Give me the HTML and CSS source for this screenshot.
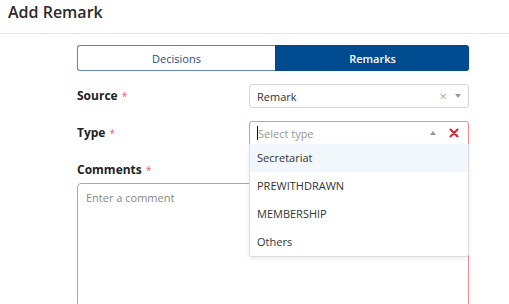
FILE: index.html
```html
<!DOCTYPE html>
<html lang="en">
<head>
  <meta charset="UTF-8">
  <title>Add Remark</title>
  <link rel="stylesheet" href="styles.css">
</head>
<body>
  <div class="modal">
    <div class="modal-header">
      <h1>Add Remark</h1>
    </div>
    <div class="modal-body">
      <div class="tabs">
        <button class="tab">Decisions</button>
        <button class="tab active">Remarks</button>
      </div>

      <div class="row">
        <label class="label">Source <span class="req">*</span></label>
        <div class="select">
          <span class="value">Remark</span>
          <span class="clear">&times;</span>
          <span class="caret down"></span>
        </div>
      </div>

      <div class="row">
        <label class="label">Type <span class="req">*</span></label>
        <div class="select-wrap">
          <div class="select open invalid">
            <span class="cursor"></span>
            <span class="placeholder">Select type</span>
            <span class="caret up"></span>
            <svg class="x-red" width="10" height="10" viewBox="0 0 10 10">
              <path d="M1.5 1.5 L8.5 8.5 M8.5 1.5 L1.5 8.5" stroke="#e0202f" stroke-width="2" stroke-linecap="round"/>
            </svg>
          </div>
          <ul class="menu">
            <li class="hover">Secretariat</li>
            <li>PREWITHDRAWN</li>
            <li>MEMBERSHIP</li>
            <li>Others</li>
          </ul>
        </div>
      </div>

      <label class="label comments">Comments <span class="req">*</span></label>
      <textarea class="comment" placeholder="Enter a comment"></textarea>
    </div>
  </div>
</body>
</html>
```

FILE: styles.css
```css
body {
  margin: 0;
  font-family: 'Open Sans', 'Noto Sans', sans-serif;
  color: #333;
  background: #fff;
  overflow: hidden;
}
.modal-header {
  height: 33px;
  border-bottom: 1px solid #e6e6e6;
  padding-left: 8px;
}
.modal-header h1 {
  margin: 0;
  font-size: 16px;
  font-weight: 600;
  line-height: 25px;
  color: #2b2b2b;
}
.modal-body {
  padding: 11px 40px 0 77px;
}
.tabs {
  display: flex;
  height: 26px;
  margin-bottom: 13px;
}
.tab {
  flex: 198 1 0;
  border: 1px solid #5d86b3;
  border-right: none;
  background: #fff;
  color: #1c4f86;
  font-family: inherit;
  font-size: 11px;
  padding: 0;
  border-radius: 3px 0 0 3px;
}
.tab.active {
  flex: 194 1 0;
  background: #004a8f;
  border-color: #004a8f;
  color: #fff;
  font-weight: 600;
  border-radius: 0 3px 3px 0;
}
.row {
  display: flex;
  align-items: flex-start;
  margin-bottom: 13px;
}
.label {
  display: block;
  width: 172px;
  font-size: 12px;
  font-weight: 700;
  color: #222;
  line-height: 24px;
}
.req {
  color: #ec5a63;
  font-weight: 400;
  font-size: 10px;
  vertical-align: top;
  margin-left: 1px;
}
.select-wrap {
  flex: 1;
  position: relative;
}
.select {
  flex: 1;
  height: 24px;
  box-sizing: border-box;
  border: 1px solid #d6d6d6;
  border-radius: 3px;
  display: flex;
  align-items: center;
  padding: 0 7px;
  font-size: 11px;
  color: #333;
}
.select .value,
.select .placeholder {
  flex: 1;
}
.placeholder {
  color: #999;
}
.cursor {
  width: 1px;
  height: 14px;
  background: #111;
}
.clear {
  color: #aaa;
  font-size: 13px;
  margin-right: 8px;
}
.caret {
  width: 0;
  height: 0;
  border-left: 3.5px solid transparent;
  border-right: 3.5px solid transparent;
}
.caret.down {
  border-top: 4px solid #999;
}
.caret.up {
  border-bottom: 4px solid #999;
  margin-right: 13px;
}
.x-red {
  margin-right: 2px;
}
.select.invalid {
  border-color: #ee8a93;
}
.select.open {
  border-radius: 3px 3px 0 0;
}
.menu {
  position: absolute;
  left: 0;
  right: 0;
  top: 23px;
  margin: 0;
  padding: 0;
  list-style: none;
  background: #fff;
  border: 1px solid #ddd;
  border-top: none;
  border-radius: 0 0 3px 3px;
  box-shadow: 0 2px 4px rgba(0, 0, 0, 0.08);
  z-index: 2;
}
.menu li {
  height: 28px;
  line-height: 28px;
  padding-left: 7px;
  font-size: 11px;
  color: #333;
}
.menu li.hover {
  background: #f2f7fb;
}
.label.comments {
  margin-top: 0;
  margin-bottom: 1px;
}
.comment {
  display: block;
  width: 100%;
  height: 124px;
  box-sizing: border-box;
  border: 1px solid #ee8a93;
  border-radius: 4px;
  padding: 6px 8px;
  font-family: inherit;
  font-size: 11px;
  resize: none;
}
.comment::placeholder {
  color: #888;
}
```
